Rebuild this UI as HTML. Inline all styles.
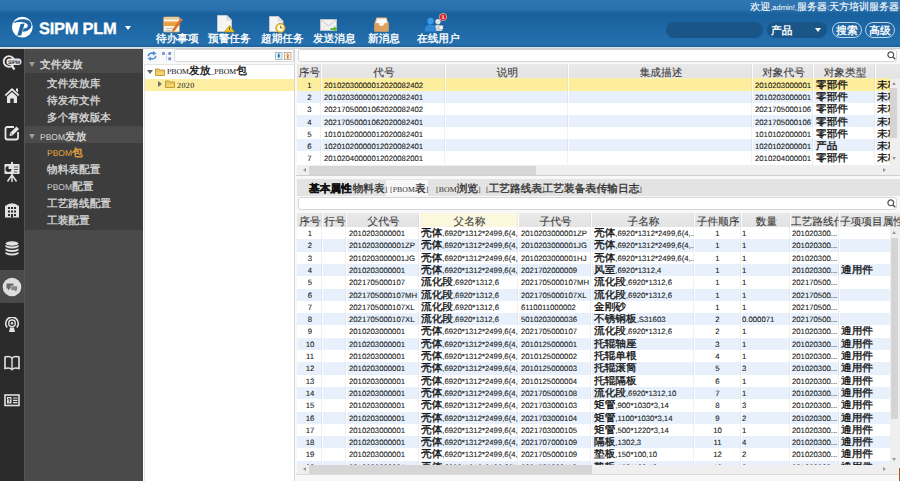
<!DOCTYPE html><html><head><meta charset="utf-8"><style>
*{box-sizing:border-box;margin:0;padding:0}
html,body{width:900px;height:481px;overflow:hidden;background:#fff;font-family:"Liberation Sans",sans-serif;font-size:7.75px;color:#222;text-rendering:geometricPrecision}
.a{position:absolute}
.c{font-size:10.67px;line-height:0;letter-spacing:0;font-family:"Liberation Sans",sans-serif;-webkit-text-stroke:0.35px currentColor}
#hdr{left:0;top:0;width:900px;height:47px;background:linear-gradient(to bottom,#2e76b2 0px,#2b71ad 9px,#18619d 14px,#1b64a1 22px,#2470ae 44px,#20629a 46px,#2a6a9e 47px)}
#hline{left:0;top:47px;width:900px;height:2px;background:linear-gradient(#dcecf7,#c9c9c9)}
#iconbar{left:0;top:49px;width:24px;height:432px;background:#2b2b2b}
#menu{left:24px;top:49px;width:119px;height:432px;background:#4a4a4a;border-left:1px solid #555}
.mh{position:absolute;left:0;width:119px;height:17px;line-height:17px;color:#dcdcdc;padding-left:15px;font-size:8.5px}
.mh .tri{position:absolute;left:4px;top:6px;width:0;height:0;border-left:3px solid transparent;border-right:3px solid transparent;border-top:5px solid #9a9a9a}
.ms{position:absolute;left:0;width:119px;background:#3d3d3d}
.mi{position:absolute;left:22px;height:17px;line-height:17px;color:#d6d6d6;white-space:nowrap;font-size:8.5px}
#tree{left:143px;top:49px;width:151px;height:432px;background:#fff}
#main{left:294px;top:49px;width:606px;height:432px;background:#f8f8f8;border-left:1px solid #d6d6d6}
.grid{position:absolute;background:#fff;overflow:hidden}
.gh{position:absolute;left:0;top:0;height:15px;background:linear-gradient(#e9e9e9,#e3e3e3)}
.hc{position:absolute;top:0;height:15px;line-height:20px;text-align:center;white-space:nowrap;overflow:hidden;color:#3a3a3a}
.hr .c{font-size:10px;-webkit-text-stroke:0.1px currentColor}
.hc .c{-webkit-text-stroke:0.1px currentColor}
.row{position:absolute;left:0}
.u .cell{top:1.8px}
.vl{position:absolute;width:1px;background:rgba(255,255,255,0.85);box-shadow:-1px 0 0 rgba(200,200,200,0.25)}
.cell{position:absolute;top:1px;white-space:nowrap;overflow:hidden;color:#161616;-webkit-text-stroke:0.08px #161616}
.even{background:#e7f0fb}
.sel{background:linear-gradient(#fdf0a4,#fdec99 50%,#fdefa3)}
.tab{position:absolute;top:0;height:16px;line-height:19px;white-space:nowrap;color:#333;font-family:"Liberation Serif",serif;letter-spacing:0.1px}
.sb{position:absolute;background:#e4e4e4}
</style></head><body><div class="a" id="hdr"></div><div class="a" id="hline"></div>
<svg class="a" style="left:11px;top:16px" width="23" height="23" viewBox="0 0 23 23">
<circle cx="11.3" cy="11.1" r="10.4" fill="#fff"/>
<path d="M2.5 7 C5.5 2.2 18.5 1.8 20.3 7.5 C21.6 12 17 15.8 11.8 15.8 L12.6 12.6 C15.6 12.6 17.2 11 16.7 9 C16 6.3 8.5 5.2 2.5 7 Z" fill="#1d66a8"/>
<path d="M6.3 19.8 L10.3 19.3 L13.6 7.6 L9.6 8.1 Z" fill="#1d66a8"/>
</svg>
<div class="a" style="left:39px;top:18.5px;height:20px;line-height:20px;font-size:16.5px;font-weight:bold;color:#fff;letter-spacing:-0.3px;-webkit-text-stroke:0.3px #fff">SIPM PLM</div>
<div class="a" style="left:125px;top:26px;width:0;height:0;border-left:3.5px solid transparent;border-right:3.5px solid transparent;border-top:4px solid #fff"></div>
<div class="a" style="left:156px;top:35px;height:9px;line-height:9px;color:#fff;white-space:nowrap"><span class="c">待办事项</span></div>
<div class="a" style="left:208px;top:35px;height:9px;line-height:9px;color:#fff;white-space:nowrap"><span class="c">预警任务</span></div>
<div class="a" style="left:261px;top:35px;height:9px;line-height:9px;color:#fff;white-space:nowrap"><span class="c">超期任务</span></div>
<div class="a" style="left:313px;top:35px;height:9px;line-height:9px;color:#fff;white-space:nowrap"><span class="c">发送消息</span></div>
<div class="a" style="left:368px;top:35px;height:9px;line-height:9px;color:#fff;white-space:nowrap"><span class="c">新消息</span></div>
<div class="a" style="left:417px;top:35px;height:9px;line-height:9px;color:#fff;white-space:nowrap"><span class="c">在线用户</span></div>
<svg class="a" style="left:163px;top:16px" width="20" height="17" viewBox="0 0 20 17">
<rect x="0.5" y="1" width="16" height="15" rx="1" fill="#f7f3ea" stroke="#b99a6a" stroke-width="0.8"/>
<rect x="1" y="1.5" width="15" height="2" fill="#e8c890"/>
<rect x="1" y="5.5" width="15" height="4.5" fill="#e8a040"/>
<path d="M3 12.5 H10 M3 14.5 H8" stroke="#bbb" stroke-width="0.9"/>
<path d="M9.5 13.5 L17.5 2.5 L19.5 4 L11.5 15 L9 16 Z" fill="#d9702a"/>
<path d="M17.5 2.5 L19.5 4" stroke="#f0c0a0" stroke-width="0.8"/>
</svg>
<svg class="a" style="left:217px;top:14.5px" width="18" height="18" viewBox="0 0 18 18">
<path d="M0.5 0.5 H10 L14.5 5 V16.5 H0.5 Z" fill="#f4f4f4" stroke="#d0d0d0" stroke-width="0.8"/>
<path d="M10 0.5 V5 H14.5" fill="#e0e0e0" stroke="#c8c8c8" stroke-width="0.6"/>
<path d="M12.5 10.5 L17.5 17 H7.5 Z" fill="#f3c42a" stroke="#b8860b" stroke-width="0.7"/>
<path d="M12.5 12.5 V14.8" stroke="#6a4a00" stroke-width="1"/>
</svg>
<svg class="a" style="left:269px;top:15.5px" width="18" height="17" viewBox="0 0 18 17">
<path d="M0.5 0.5 H9.5 L14 5 V15.5 H0.5 Z" fill="#f4f4f4" stroke="#d0d0d0" stroke-width="0.8"/>
<path d="M9.5 0.5 V5 H14" fill="#e0e0e0" stroke="#c8c8c8" stroke-width="0.6"/>
<circle cx="11.5" cy="12" r="4.6" fill="#f6d252" stroke="#b88a20" stroke-width="0.9"/>
<circle cx="11.5" cy="12" r="3.2" fill="#fff6d0"/>
<path d="M11.5 9.8 V12 H13.5" stroke="#806020" stroke-width="0.9" fill="none"/>
</svg>
<svg class="a" style="left:320px;top:18.5px" width="18" height="13" viewBox="0 0 18 13">
<rect x="0.5" y="0.5" width="16" height="11" fill="#f2f2f2" stroke="#c8c8c8" stroke-width="0.8"/>
<path d="M0.5 0.5 L8.5 7 L16.5 0.5" fill="none" stroke="#c0c0c0" stroke-width="0.9"/>
<path d="M0.5 11.5 L6.5 6 M16.5 11.5 L10.5 6" fill="none" stroke="#d8d8d8" stroke-width="0.7"/>
<path d="M10.5 9 H14 V7 L17.5 10 L14 13 V11 H10.5 Z" fill="#5cb838"/>
</svg>
<svg class="a" style="left:374px;top:17px" width="15" height="15" viewBox="0 0 15 15">
<path d="M0.5 6 L2.5 0.5 H12.5 L14.5 6 V14.5 H0.5 Z" fill="#e9b56e"/>
<path d="M3 1.5 H12 L13 6 H2 Z" fill="#fbfbfb"/>
<path d="M0.5 6 H4.5 Q5 9 7.5 9 Q10 9 10.5 6 H14.5 V14.5 H0.5 Z" fill="#dca060"/>
<path d="M4.5 6 Q5 9 7.5 9 Q10 9 10.5 6" fill="#fff" fill-opacity="0.85"/>
</svg>
<svg class="a" style="left:424px;top:12.5px" width="23" height="19" viewBox="0 0 23 19">
<circle cx="14" cy="8.5" r="2.6" fill="#e6e6e6"/>
<path d="M10 18 Q10 11.5 14 11.5 Q18 11.5 18 18 Z" fill="#d8d8d8"/>
<rect x="15" y="12.5" width="4" height="4" fill="#f8f8f8" stroke="#999" stroke-width="0.5"/>
<circle cx="6.5" cy="8" r="3.2" fill="#3a9ae8"/>
<path d="M0.5 18.5 Q0.5 11.5 6.5 11.5 Q12.5 11.5 12.5 18.5 Z" fill="#2e88d8"/>
<circle cx="19" cy="4" r="3.7" fill="#d82020" stroke="#f0f0f0" stroke-width="0.5"/>
<text x="19" y="6.1" font-size="5.5" fill="#fff" text-anchor="middle" font-family="Liberation Sans" font-weight="bold">1</text>
</svg>
<div class="a hr" style="right:1px;top:3px;height:10px;line-height:10px;color:#fff;white-space:nowrap;font-size:7.5px"><span class="c">欢迎</span>,admin!,<span class="c">服务器</span>:<span class="c">天方培训服务器</span></div>
<div class="a" style="left:666px;top:22px;width:97px;height:16px;border-radius:8px;background:#1a5587"></div>
<div class="a" style="left:767px;top:22px;width:60px;height:16px;border-radius:8px;background:#1a5587;color:#fff;line-height:19.5px;padding-left:4px"><span class="c">产品</span></div>
<div class="a" style="left:815px;top:28px;width:0;height:0;border-left:3.5px solid transparent;border-right:3.5px solid transparent;border-top:4px solid #fff"></div>
<div class="a" style="left:832px;top:22px;width:30px;height:16px;border-radius:8px;border:1px solid #b8d2e6;color:#fff;line-height:18px;text-align:center"><span class="c">搜索</span></div>
<div class="a" style="left:865px;top:22px;width:30px;height:16px;border-radius:8px;border:1px solid #b8d2e6;color:#fff;line-height:18px;text-align:center"><span class="c">高级</span></div>
<div class="a" id="iconbar"></div>
<div class="a" id="menu">
<div class="mh" style="top:8px"><span class="tri" style="top:5px"></span><span class="c">文件发放</span></div>
<div class="ms" style="top:24px;height:53px"></div>
<div class="mi" style="top:27px"><span class="c">文件发放库</span></div>
<div class="mi" style="top:44px"><span class="c">待发布文件</span></div>
<div class="mi" style="top:61px"><span class="c">多个有效版本</span></div>
<div class="mh" style="top:79px;height:16px;background:#4b4b4b;line-height:18px"><span class="tri"></span>PBOM<span class="c">发放</span></div>
<div class="ms" style="top:94px;height:87px"></div>
<div class="mi" style="top:96px;color:#e8a93a">PBOM<span class="c">包</span></div>
<div class="mi" style="top:113px;color:#d6d6d6"><span class="c">物料表配置</span></div>
<div class="mi" style="top:130px;color:#d6d6d6">PBOM<span class="c">配置</span></div>
<div class="mi" style="top:147px;color:#d6d6d6"><span class="c">工艺路线配置</span></div>
<div class="mi" style="top:164px;color:#d6d6d6"><span class="c">工装配置</span></div>
</div>
<svg class="a" style="left:2px;top:55px" width="20" height="16" viewBox="0 0 20 16">
<circle cx="7" cy="6.5" r="5.3" fill="none" stroke="#e6e6e6" stroke-width="1.8"/>
<path d="M9.5 10.5 L12.5 14.5" stroke="#e6e6e6" stroke-width="2.2"/>
<rect x="4.5" y="3.5" width="15" height="6.5" rx="3.2" fill="#e6e6e6"/>
<text x="12" y="8.9" font-size="5.2" font-weight="bold" text-anchor="middle" fill="#333" font-family="Liberation Sans" letter-spacing="-0.2">SIPM</text>
</svg>
<svg class="a" style="left:4px;top:87px" width="16" height="17" viewBox="0 0 16 17">
<path d="M8 1 L15.5 8 L14 9 L8 3.5 L2 9 L0.5 8 Z" fill="#e6e6e6"/>
<path d="M12 1.5 H14 V5.5 L12 3.8 Z" fill="#e6e6e6"/>
<path d="M3 9.5 L8 5 L13 9.5 V16 H9.7 V11.5 H6.3 V16 H3 Z" fill="#e6e6e6"/>
</svg>
<svg class="a" style="left:4px;top:125px" width="16" height="16" viewBox="0 0 16 16">
<path d="M10 2 H3.5 Q1.5 2 1.5 4 V12.5 Q1.5 14.5 3.5 14.5 H12 Q14 14.5 14 12.5 V7" fill="none" stroke="#e6e6e6" stroke-width="1.8"/>
<path d="M5.5 11 L6 8 L12.5 1.5 L15 4 L8.5 10.5 Z" fill="#e6e6e6"/>
<path d="M6.8 8.2 L8.2 9.6" stroke="#2b2b2b" stroke-width="0.8"/>
</svg>
<svg class="a" style="left:4px;top:162px" width="16" height="20" viewBox="0 0 16 20">
<rect x="0.5" y="2" width="15" height="10" fill="#e2e2e2"/>
<rect x="7" y="0" width="2" height="2.5" fill="#e2e2e2"/>
<path d="M4.5 7 L4.5 4 A3 3 0 1 0 7.5 7 Z" fill="#2b2b2b"/>
<path d="M10 5 H14 M10 7.5 H14 M10 10 H13" stroke="#555" stroke-width="1"/>
<path d="M8 12 V20 M8 13 L3.5 19.5 M8 13 L12.5 19.5" stroke="#e2e2e2" stroke-width="1.5"/>
</svg>
<svg class="a" style="left:4px;top:201px" width="16" height="17" viewBox="0 0 16 17">
<path d="M1 16.5 V5 Q8 -0.5 15 5 V16.5 Z" fill="#e2e2e2"/>
<rect x="4" y="6" width="2" height="2" fill="#2b2b2b"/><rect x="7" y="6" width="2" height="2" fill="#2b2b2b"/><rect x="10" y="6" width="2" height="2" fill="#2b2b2b"/>
<rect x="4" y="9.5" width="2" height="2" fill="#2b2b2b"/><rect x="7" y="9.5" width="2" height="2" fill="#2b2b2b"/><rect x="10" y="9.5" width="2" height="2" fill="#2b2b2b"/>
<rect x="4" y="13" width="2" height="2" fill="#2b2b2b"/><rect x="7" y="13" width="2" height="3.5" fill="#2b2b2b"/><rect x="10" y="13" width="2" height="2" fill="#2b2b2b"/>
</svg>
<svg class="a" style="left:5px;top:241px" width="14" height="16" viewBox="0 0 14 16">
<ellipse cx="7" cy="2.5" rx="6.5" ry="2.2" fill="#e2e2e2"/>
<path d="M0.5 4 Q7 7.2 13.5 4 V6 Q7 9.2 0.5 6 Z" fill="#e2e2e2"/>
<path d="M0.5 7.5 Q7 10.7 13.5 7.5 V9.5 Q7 12.7 0.5 9.5 Z" fill="#e2e2e2"/>
<path d="M0.5 11 Q7 14.2 13.5 11 V13 Q7 16.2 0.5 13 Z" fill="#e2e2e2"/>
</svg>

<div class="a" style="left:0;top:270px;width:24px;height:33px;background:#4a4a4a"></div>
<svg class="a" style="left:1.5px;top:276.5px" width="20" height="20" viewBox="0 0 20 20">
<circle cx="10" cy="10" r="9.3" fill="#dedede"/>
<path d="M4.5 6.5 H11.5 V11.5 H8 L6 13.5 V11.5 H4.5 Z" fill="#6a6a6a"/>
<path d="M9 9 H15.5 V13.5 H14.5 V15.5 L12.5 13.5 H9 Z" fill="#888" stroke="#dedede" stroke-width="0.6"/>
</svg>
<svg class="a" style="left:4px;top:317px" width="16" height="15" viewBox="0 0 16 15">
<path d="M3.2 10.5 A6.3 6.3 0 1 1 12.8 10.5" fill="none" stroke="#e2e2e2" stroke-width="1.6"/>
<circle cx="8" cy="6.3" r="3.3" fill="none" stroke="#e2e2e2" stroke-width="1.4"/>
<circle cx="8" cy="6.3" r="1.2" fill="#e2e2e2"/>
<path d="M5 15 L6 10.5 H10 L11 15 Z" fill="#e2e2e2"/>
</svg>
<svg class="a" style="left:4px;top:355px" width="16" height="16" viewBox="0 0 16 16">
<path d="M1 2 C4 1 6.5 1.5 8 3 C9.5 1.5 12 1 15 2 V13.5 C12 12.5 9.5 13 8 14.5 C6.5 13 4 12.5 1 13.5 Z" fill="none" stroke="#e2e2e2" stroke-width="1.6"/>
<path d="M8 3 V14.5" stroke="#e2e2e2" stroke-width="1.4"/>
</svg>
<svg class="a" style="left:4px;top:394px" width="16" height="13" viewBox="0 0 16 13">
<rect x="1" y="1" width="14" height="10.5" fill="none" stroke="#e2e2e2" stroke-width="1.6"/>
<rect x="3" y="3" width="4.5" height="6.5" fill="#e2e2e2"/>
<path d="M5.25 4 V8.5 M4 5.5 L5.25 4 L6.5 5.5" stroke="#2b2b2b" stroke-width="0.9" fill="none"/>
<path d="M9 4 H13.5 M9 6.3 H13.5 M9 8.6 H13.5" stroke="#e2e2e2" stroke-width="1.2"/>
</svg>

<div class="a" id="tree"></div>
<div class="a" style="left:143px;top:49px;width:151px;height:15px;background:#f9f9f9"></div>
<svg class="a" style="left:147px;top:51px" width="10" height="10" viewBox="0 0 10 10">
<path d="M1.2 5.2 C1.2 2.5 4 1.6 7 2.3" fill="none" stroke="#4a8fd2" stroke-width="1.7"/><path d="M6 0 L9.6 2.6 L5.8 4.6 Z" fill="#4a8fd2"/>
<path d="M8.8 4.8 C8.8 7.5 6 8.4 3 7.7" fill="none" stroke="#5a9ad8" stroke-width="1.7"/><path d="M4 10 L0.4 7.4 L4.2 5.4 Z" fill="#5a9ad8"/>
</svg>
<svg class="a" style="left:161px;top:51px" width="11" height="10" viewBox="0 0 11 10">
<rect x="1" y="1" width="3" height="3" rx="1" fill="#7a92d2"/><rect x="7.2" y="1" width="3" height="3" rx="1" fill="#7a92d2"/><rect x="7.2" y="6.2" width="3" height="3" rx="0.6" fill="#7a92d2"/>
<path d="M5.6 3 V9.5" stroke="#a8b4d8" stroke-width="0.8" stroke-dasharray="1 0.8"/>
</svg>

<div class="a" style="left:174px;top:49px;width:120px;height:13px;background:#fff;border:1px solid #d8d8d8;border-radius:2px"></div>
<svg class="a" style="left:275px;top:51.5px" width="17" height="8" viewBox="0 0 17 8">
<rect x="0.5" y="0.5" width="6.5" height="7" fill="#e8f6fc" stroke="#9aa8b0" stroke-width="0.8"/>
<path d="M2.2 3.5 H5.3 L3.75 6.5 Z M3 1.5 H4.5 V4 H3 Z" fill="#1a7cb8"/>
<rect x="9.5" y="0.5" width="6.5" height="7" fill="#fcefe6" stroke="#a8a09a" stroke-width="0.8"/>
<path d="M11.2 4 H14.3 L12.75 1.2 Z M12 3.5 H13.5 V6.5 H12 Z" fill="#e06a1a"/>
</svg>
<div class="a" style="left:144px;top:64px;width:150px;height:417px;border:1px solid #e4e4e4;border-right:none;border-bottom:none;background:#fff"></div>
<div class="a" style="left:145px;top:78.5px;width:149px;height:12.5px;background:#fdeea2"></div>
<div class="a" style="left:147px;top:70px;width:0;height:0;border-left:3px solid transparent;border-right:3px solid transparent;border-top:4.5px solid #666"></div>
<svg class="a" style="left:155px;top:68px" width="10" height="8" viewBox="0 0 10 8"><path d="M0.5 1 H4 L5 2 H9.5 V7.5 H0.5 Z" fill="#f2d46a" stroke="#b08a28" stroke-width="0.8"/><path d="M0.5 3 H9.5" stroke="#c9a440" stroke-width="0.6"/></svg>
<div class="a" style="left:167px;top:66px;height:12px;line-height:12px;color:#111;white-space:nowrap;font-family:Liberation Serif;letter-spacing:0">PBOM<span class="c">发放</span>_PBOM<span class="c">包</span></div>
<div class="a" style="left:158px;top:81px;width:0;height:0;border-top:3px solid transparent;border-bottom:3px solid transparent;border-left:4.5px solid #707070"></div>
<svg class="a" style="left:165px;top:80px" width="10" height="8" viewBox="0 0 10 8"><path d="M0.5 1 H4 L5 2 H9.5 V7.5 H0.5 Z" fill="#f2d46a" stroke="#b08a28" stroke-width="0.8"/><path d="M0.5 3 H9.5" stroke="#c9a440" stroke-width="0.6"/></svg>
<div class="a" style="left:177px;top:79px;height:13px;line-height:13px;color:#111;white-space:nowrap;font-family:Liberation Serif;font-size:8px;letter-spacing:0.4px">2020</div>
<div class="a" id="main"></div>
<div class="a" style="left:298px;top:49px;width:599px;height:13px;background:#fff;border:1px solid #d6d6d6;border-radius:3px"></div><svg class="a" style="left:887px;top:51px" width="9" height="9" viewBox="0 0 9 9"><circle cx="3.8" cy="3.8" r="2.9" fill="none" stroke="#555" stroke-width="1.3"/><path d="M6 6 L8.3 8.3" stroke="#555" stroke-width="1.6"/></svg>
<div class="grid" style="left:297px;top:64px;width:603px;height:112px">
<div class="gh" style="width:603px">
<div class="hc" style="left:0px;width:25px"><span class="c">序号</span></div>
<div class="hc" style="left:25px;width:124px"><span class="c">代号</span></div>
<div class="hc" style="left:149px;width:123px"><span class="c">说明</span></div>
<div class="hc" style="left:272px;width:184px"><span class="c">集成描述</span></div>
<div class="hc" style="left:456px;width:61px"><span class="c">对象代号</span></div>
<div class="hc" style="left:517px;width:62px"><span class="c">对象类型</span></div>
<div class="hc" style="left:579px;width:14px"></div>
</div>
<div class="row u sel" style="top:14.40px;width:593px;height:12.15px;line-height:12.15px">
<div class="cell" style="left:0;width:25px;text-align:center">1</div>
<div class="cell" style="left:27px;width:120px">20102030000012020082402</div>
<div class="cell" style="left:458px;width:60px">2010203000001</div>
<div class="cell" style="left:519px;width:60px"><span class="c">零部件</span></div>
<div class="cell" style="left:580px;width:13px"><span class="c">未核准</span></div>
</div>
<div class="row u even" style="top:26.55px;width:593px;height:12.15px;line-height:12.15px">
<div class="cell" style="left:0;width:25px;text-align:center">2</div>
<div class="cell" style="left:27px;width:120px">20102030000012020082401</div>
<div class="cell" style="left:458px;width:60px">2010203000001</div>
<div class="cell" style="left:519px;width:60px"><span class="c">零部件</span></div>
<div class="cell" style="left:580px;width:13px"><span class="c">未核准</span></div>
</div>
<div class="row u " style="top:38.70px;width:593px;height:12.15px;line-height:12.15px">
<div class="cell" style="left:0;width:25px;text-align:center">3</div>
<div class="cell" style="left:27px;width:120px">20217050001062020082402</div>
<div class="cell" style="left:458px;width:60px">2021705000106</div>
<div class="cell" style="left:519px;width:60px"><span class="c">零部件</span></div>
<div class="cell" style="left:580px;width:13px"><span class="c">未核准</span></div>
</div>
<div class="row u even" style="top:50.85px;width:593px;height:12.15px;line-height:12.15px">
<div class="cell" style="left:0;width:25px;text-align:center">4</div>
<div class="cell" style="left:27px;width:120px">20217050001062020082401</div>
<div class="cell" style="left:458px;width:60px">2021705000106</div>
<div class="cell" style="left:519px;width:60px"><span class="c">零部件</span></div>
<div class="cell" style="left:580px;width:13px"><span class="c">未核准</span></div>
</div>
<div class="row u " style="top:63.00px;width:593px;height:12.15px;line-height:12.15px">
<div class="cell" style="left:0;width:25px;text-align:center">5</div>
<div class="cell" style="left:27px;width:120px">10101020000012020082401</div>
<div class="cell" style="left:458px;width:60px">1010102000001</div>
<div class="cell" style="left:519px;width:60px"><span class="c">零部件</span></div>
<div class="cell" style="left:580px;width:13px"><span class="c">未核准</span></div>
</div>
<div class="row u even" style="top:75.15px;width:593px;height:12.15px;line-height:12.15px">
<div class="cell" style="left:0;width:25px;text-align:center">6</div>
<div class="cell" style="left:27px;width:120px">10201020000012020082401</div>
<div class="cell" style="left:458px;width:60px">1020102000001</div>
<div class="cell" style="left:519px;width:60px"><span class="c">产品</span></div>
<div class="cell" style="left:580px;width:13px"><span class="c">未核准</span></div>
</div>
<div class="row u " style="top:87.30px;width:593px;height:12.15px;line-height:12.15px">
<div class="cell" style="left:0;width:25px;text-align:center">7</div>
<div class="cell" style="left:27px;width:120px">20102040000012020082001</div>
<div class="cell" style="left:458px;width:60px">2010204000001</div>
<div class="cell" style="left:519px;width:60px"><span class="c">零部件</span></div>
<div class="cell" style="left:580px;width:13px"><span class="c">未核准</span></div>
</div>
<div class="vl" style="left:24px;top:0;height:150px"></div>
<div class="vl" style="left:148px;top:0;height:150px"></div>
<div class="vl" style="left:271px;top:0;height:150px"></div>
<div class="vl" style="left:455px;top:0;height:150px"></div>
<div class="vl" style="left:516px;top:0;height:150px"></div>
<div class="vl" style="left:578px;top:0;height:150px"></div>
</div>
<div class="sb" style="left:890px;top:79px;width:10px;height:86px;background:#efefef"></div>
<div class="sb" style="left:890px;top:88px;width:7px;height:50px;background:#d4d4d4"></div>
<div class="a" style="left:892px;top:82px;width:0;height:0;border-left:2.5px solid transparent;border-right:2.5px solid transparent;border-bottom:3.5px solid #999"></div>
<div class="a" style="left:892px;top:157px;width:0;height:0;border-left:2.5px solid transparent;border-right:2.5px solid transparent;border-top:3.5px solid #999"></div>
<div class="sb" style="left:297px;top:165px;width:603px;height:10px;background:#efefef"></div>
<div class="sb" style="left:309px;top:165.5px;width:227px;height:9.5px;background:#d6d6d6"></div>
<div class="a" style="left:302.5px;top:168px;width:0;height:0;border-top:2.5px solid transparent;border-bottom:2.5px solid transparent;border-right:3.5px solid #999"></div>
<div class="a" style="left:883px;top:168px;width:0;height:0;border-top:2.5px solid transparent;border-bottom:2.5px solid transparent;border-left:3.5px solid #999"></div>
<div class="a" style="left:296px;top:175px;width:604px;height:1px;background:#d0d0d0"></div>
<div class="a" style="left:297px;top:179px;width:603px;height:17px;background:#e3e3e3"></div>
<div class="a" style="left:386px;top:180px;width:42px;height:16px;background:#f7f7f7"></div>
<div class="tab" style="left:309px;top:180px;font-weight:bold;color:#111"><span class="c">基本属性</span></div>
<div class="tab" style="left:350px;top:180px;">[<span class="c">物料表</span>]</div>
<div class="tab" style="left:390px;top:180px;">[PBOM<span class="c">表</span>]</div>
<div class="tab" style="left:436px;top:180px;">[BOM<span class="c">浏览</span>]</div>
<div class="tab" style="left:486px;top:180px;">[<span class="c">工艺路线表</span>]</div>
<div class="tab" style="left:540px;top:180px;">[<span class="c">工艺装备表</span>]</div>
<div class="tab" style="left:594px;top:180px;">[<span class="c">传输日志</span>]</div>
<div class="a" style="left:298px;top:197px;width:599px;height:13px;background:#fff;border:1px solid #d6d6d6;border-radius:3px"></div><svg class="a" style="left:887px;top:199px" width="9" height="9" viewBox="0 0 9 9"><circle cx="3.8" cy="3.8" r="2.9" fill="none" stroke="#555" stroke-width="1.3"/><path d="M6 6 L8.3 8.3" stroke="#555" stroke-width="1.6"/></svg>
<div class="grid" style="left:297px;top:213px;width:603px;height:252px">
<div class="gh" style="width:603px;height:14px">
<div class="hc" style="left:0px;width:26px;height:14px;line-height:20px;"><span class="c">序号</span></div>
<div class="hc" style="left:26px;width:24px;height:14px;line-height:20px;"><span class="c">行号</span></div>
<div class="hc" style="left:50px;width:73px;height:14px;line-height:20px;"><span class="c">父代号</span></div>
<div class="hc" style="left:123px;width:99px;height:14px;line-height:20px;background:#fcf8de;"><span class="c">父名称</span></div>
<div class="hc" style="left:222px;width:73px;height:14px;line-height:20px;"><span class="c">子代号</span></div>
<div class="hc" style="left:295px;width:103px;height:14px;line-height:20px;"><span class="c">子名称</span></div>
<div class="hc" style="left:397px;width:48px;height:14px;line-height:20px;"><span class="c">子件顺序</span></div>
<div class="hc" style="left:445px;width:49px;height:14px;line-height:20px;"><span class="c">数量</span></div>
<div class="hc" style="left:494px;width:49px;height:14px;line-height:20px;"><span class="c">工艺路线代</span>...</div>
<div class="hc" style="left:543px;width:60px;height:14px;line-height:20px;"><span class="c">子项项目属性</span></div>
</div>
<div class="row " style="top:14.00px;width:593px;height:12.30px;line-height:12.30px">
<div class="cell" style="left:0;width:26px;text-align:center">1</div>
<div class="cell" style="left:52px;width:70px">2010203000001</div>
<div class="cell" style="left:124px;width:97px"><span class="c">壳体</span>,6920*1312*2499,6(4,...</div>
<div class="cell" style="left:224px;width:70px">2010203000001ZP</div>
<div class="cell" style="left:297px;width:100px"><span class="c">壳体</span>,6920*1312*2499,6(4,...</div>
<div class="cell" style="left:398px;width:45px;text-align:center">1</div>
<div class="cell" style="left:445px;width:48px">1</div>
<div class="cell" style="left:495px;width:48px">201020300...</div>
<div class="cell" style="left:544px;width:48px"></div>
</div>
<div class="row even" style="top:26.30px;width:593px;height:12.30px;line-height:12.30px">
<div class="cell" style="left:0;width:26px;text-align:center">2</div>
<div class="cell" style="left:52px;width:70px">2010203000001ZP</div>
<div class="cell" style="left:124px;width:97px"><span class="c">壳体</span>,6920*1312*2499,6(4,...</div>
<div class="cell" style="left:224px;width:70px">2010203000001JG</div>
<div class="cell" style="left:297px;width:100px"><span class="c">壳体</span>,6920*1312*2499,6(4,...</div>
<div class="cell" style="left:398px;width:45px;text-align:center">1</div>
<div class="cell" style="left:445px;width:48px">1</div>
<div class="cell" style="left:495px;width:48px">201020300...</div>
<div class="cell" style="left:544px;width:48px"></div>
</div>
<div class="row " style="top:38.60px;width:593px;height:12.30px;line-height:12.30px">
<div class="cell" style="left:0;width:26px;text-align:center">3</div>
<div class="cell" style="left:52px;width:70px">2010203000001JG</div>
<div class="cell" style="left:124px;width:97px"><span class="c">壳体</span>,6920*1312*2499,6(4,...</div>
<div class="cell" style="left:224px;width:70px">2010203000001HJ</div>
<div class="cell" style="left:297px;width:100px"><span class="c">壳体</span>,6920*1312*2499,6(4,...</div>
<div class="cell" style="left:398px;width:45px;text-align:center">1</div>
<div class="cell" style="left:445px;width:48px">1</div>
<div class="cell" style="left:495px;width:48px">201020300...</div>
<div class="cell" style="left:544px;width:48px"></div>
</div>
<div class="row even" style="top:50.90px;width:593px;height:12.30px;line-height:12.30px">
<div class="cell" style="left:0;width:26px;text-align:center">4</div>
<div class="cell" style="left:52px;width:70px">2010203000001</div>
<div class="cell" style="left:124px;width:97px"><span class="c">壳体</span>,6920*1312*2499,6(4,...</div>
<div class="cell" style="left:224px;width:70px">2021702000009</div>
<div class="cell" style="left:297px;width:100px"><span class="c">风室</span>,6920*1312,4</div>
<div class="cell" style="left:398px;width:45px;text-align:center">1</div>
<div class="cell" style="left:445px;width:48px">1</div>
<div class="cell" style="left:495px;width:48px">201020300...</div>
<div class="cell" style="left:544px;width:48px"><span class="c">通用件</span></div>
</div>
<div class="row " style="top:63.20px;width:593px;height:12.30px;line-height:12.30px">
<div class="cell" style="left:0;width:26px;text-align:center">5</div>
<div class="cell" style="left:52px;width:70px">2021705000107</div>
<div class="cell" style="left:124px;width:97px"><span class="c">流化段</span>,6920*1312,6</div>
<div class="cell" style="left:224px;width:70px">2021705000107MH</div>
<div class="cell" style="left:297px;width:100px"><span class="c">流化段</span>,6920*1312,6</div>
<div class="cell" style="left:398px;width:45px;text-align:center">1</div>
<div class="cell" style="left:445px;width:48px">1</div>
<div class="cell" style="left:495px;width:48px">202170500...</div>
<div class="cell" style="left:544px;width:48px"></div>
</div>
<div class="row even" style="top:75.50px;width:593px;height:12.30px;line-height:12.30px">
<div class="cell" style="left:0;width:26px;text-align:center">6</div>
<div class="cell" style="left:52px;width:70px">2021705000107MH</div>
<div class="cell" style="left:124px;width:97px"><span class="c">流化段</span>,6920*1312,6</div>
<div class="cell" style="left:224px;width:70px">2021705000107XL</div>
<div class="cell" style="left:297px;width:100px"><span class="c">流化段</span>,6920*1312,6</div>
<div class="cell" style="left:398px;width:45px;text-align:center">1</div>
<div class="cell" style="left:445px;width:48px">1</div>
<div class="cell" style="left:495px;width:48px">202170500...</div>
<div class="cell" style="left:544px;width:48px"></div>
</div>
<div class="row " style="top:87.80px;width:593px;height:12.30px;line-height:12.30px">
<div class="cell" style="left:0;width:26px;text-align:center">7</div>
<div class="cell" style="left:52px;width:70px">2021705000107XL</div>
<div class="cell" style="left:124px;width:97px"><span class="c">流化段</span>,6920*1312,6</div>
<div class="cell" style="left:224px;width:70px">6110011000002</div>
<div class="cell" style="left:297px;width:100px"><span class="c">金刚砂</span></div>
<div class="cell" style="left:398px;width:45px;text-align:center">1</div>
<div class="cell" style="left:445px;width:48px">1</div>
<div class="cell" style="left:495px;width:48px">202170500...</div>
<div class="cell" style="left:544px;width:48px"></div>
</div>
<div class="row even" style="top:100.10px;width:593px;height:12.30px;line-height:12.30px">
<div class="cell" style="left:0;width:26px;text-align:center">8</div>
<div class="cell" style="left:52px;width:70px">2021705000107XL</div>
<div class="cell" style="left:124px;width:97px"><span class="c">流化段</span>,6920*1312,6</div>
<div class="cell" style="left:224px;width:70px">5010203000036</div>
<div class="cell" style="left:297px;width:100px"><span class="c">不锈钢板</span>,S31603</div>
<div class="cell" style="left:398px;width:45px;text-align:center">2</div>
<div class="cell" style="left:445px;width:48px">0.000071</div>
<div class="cell" style="left:495px;width:48px">202170500...</div>
<div class="cell" style="left:544px;width:48px"></div>
</div>
<div class="row " style="top:112.40px;width:593px;height:12.30px;line-height:12.30px">
<div class="cell" style="left:0;width:26px;text-align:center">9</div>
<div class="cell" style="left:52px;width:70px">2010203000001</div>
<div class="cell" style="left:124px;width:97px"><span class="c">壳体</span>,6920*1312*2499,6(4,...</div>
<div class="cell" style="left:224px;width:70px">2021705000107</div>
<div class="cell" style="left:297px;width:100px"><span class="c">流化段</span>,6920*1312,6</div>
<div class="cell" style="left:398px;width:45px;text-align:center">2</div>
<div class="cell" style="left:445px;width:48px">1</div>
<div class="cell" style="left:495px;width:48px">201020300...</div>
<div class="cell" style="left:544px;width:48px"><span class="c">通用件</span></div>
</div>
<div class="row even" style="top:124.70px;width:593px;height:12.30px;line-height:12.30px">
<div class="cell" style="left:0;width:26px;text-align:center">10</div>
<div class="cell" style="left:52px;width:70px">2010203000001</div>
<div class="cell" style="left:124px;width:97px"><span class="c">壳体</span>,6920*1312*2499,6(4,...</div>
<div class="cell" style="left:224px;width:70px">2010125000001</div>
<div class="cell" style="left:297px;width:100px"><span class="c">托辊轴座</span></div>
<div class="cell" style="left:398px;width:45px;text-align:center">3</div>
<div class="cell" style="left:445px;width:48px">1</div>
<div class="cell" style="left:495px;width:48px">201020300...</div>
<div class="cell" style="left:544px;width:48px"><span class="c">通用件</span></div>
</div>
<div class="row " style="top:137.00px;width:593px;height:12.30px;line-height:12.30px">
<div class="cell" style="left:0;width:26px;text-align:center">11</div>
<div class="cell" style="left:52px;width:70px">2010203000001</div>
<div class="cell" style="left:124px;width:97px"><span class="c">壳体</span>,6920*1312*2499,6(4,...</div>
<div class="cell" style="left:224px;width:70px">2010125000002</div>
<div class="cell" style="left:297px;width:100px"><span class="c">托辊单根</span></div>
<div class="cell" style="left:398px;width:45px;text-align:center">4</div>
<div class="cell" style="left:445px;width:48px">1</div>
<div class="cell" style="left:495px;width:48px">201020300...</div>
<div class="cell" style="left:544px;width:48px"><span class="c">通用件</span></div>
</div>
<div class="row even" style="top:149.30px;width:593px;height:12.30px;line-height:12.30px">
<div class="cell" style="left:0;width:26px;text-align:center">12</div>
<div class="cell" style="left:52px;width:70px">2010203000001</div>
<div class="cell" style="left:124px;width:97px"><span class="c">壳体</span>,6920*1312*2499,6(4,...</div>
<div class="cell" style="left:224px;width:70px">2010125000003</div>
<div class="cell" style="left:297px;width:100px"><span class="c">托辊滚筒</span></div>
<div class="cell" style="left:398px;width:45px;text-align:center">5</div>
<div class="cell" style="left:445px;width:48px">3</div>
<div class="cell" style="left:495px;width:48px">201020300...</div>
<div class="cell" style="left:544px;width:48px"><span class="c">通用件</span></div>
</div>
<div class="row " style="top:161.60px;width:593px;height:12.30px;line-height:12.30px">
<div class="cell" style="left:0;width:26px;text-align:center">13</div>
<div class="cell" style="left:52px;width:70px">2010203000001</div>
<div class="cell" style="left:124px;width:97px"><span class="c">壳体</span>,6920*1312*2499,6(4,...</div>
<div class="cell" style="left:224px;width:70px">2010125000004</div>
<div class="cell" style="left:297px;width:100px"><span class="c">托辊隔板</span></div>
<div class="cell" style="left:398px;width:45px;text-align:center">6</div>
<div class="cell" style="left:445px;width:48px">1</div>
<div class="cell" style="left:495px;width:48px">201020300...</div>
<div class="cell" style="left:544px;width:48px"><span class="c">通用件</span></div>
</div>
<div class="row even" style="top:173.90px;width:593px;height:12.30px;line-height:12.30px">
<div class="cell" style="left:0;width:26px;text-align:center">14</div>
<div class="cell" style="left:52px;width:70px">2010203000001</div>
<div class="cell" style="left:124px;width:97px"><span class="c">壳体</span>,6920*1312*2499,6(4,...</div>
<div class="cell" style="left:224px;width:70px">2021705000108</div>
<div class="cell" style="left:297px;width:100px"><span class="c">流化段</span>,6920*1312,10</div>
<div class="cell" style="left:398px;width:45px;text-align:center">7</div>
<div class="cell" style="left:445px;width:48px">1</div>
<div class="cell" style="left:495px;width:48px">201020300...</div>
<div class="cell" style="left:544px;width:48px"><span class="c">通用件</span></div>
</div>
<div class="row " style="top:186.20px;width:593px;height:12.30px;line-height:12.30px">
<div class="cell" style="left:0;width:26px;text-align:center">15</div>
<div class="cell" style="left:52px;width:70px">2010203000001</div>
<div class="cell" style="left:124px;width:97px"><span class="c">壳体</span>,6920*1312*2499,6(4,...</div>
<div class="cell" style="left:224px;width:70px">2021703000103</div>
<div class="cell" style="left:297px;width:100px"><span class="c">矩管</span>,900*1030*3,14</div>
<div class="cell" style="left:398px;width:45px;text-align:center">8</div>
<div class="cell" style="left:445px;width:48px">3</div>
<div class="cell" style="left:495px;width:48px">201020300...</div>
<div class="cell" style="left:544px;width:48px"><span class="c">通用件</span></div>
</div>
<div class="row even" style="top:198.50px;width:593px;height:12.30px;line-height:12.30px">
<div class="cell" style="left:0;width:26px;text-align:center">16</div>
<div class="cell" style="left:52px;width:70px">2010203000001</div>
<div class="cell" style="left:124px;width:97px"><span class="c">壳体</span>,6920*1312*2499,6(4,...</div>
<div class="cell" style="left:224px;width:70px">2021703000104</div>
<div class="cell" style="left:297px;width:100px"><span class="c">矩管</span>,1100*1030*3,14</div>
<div class="cell" style="left:398px;width:45px;text-align:center">9</div>
<div class="cell" style="left:445px;width:48px">2</div>
<div class="cell" style="left:495px;width:48px">201020300...</div>
<div class="cell" style="left:544px;width:48px"><span class="c">通用件</span></div>
</div>
<div class="row " style="top:210.80px;width:593px;height:12.30px;line-height:12.30px">
<div class="cell" style="left:0;width:26px;text-align:center">17</div>
<div class="cell" style="left:52px;width:70px">2010203000001</div>
<div class="cell" style="left:124px;width:97px"><span class="c">壳体</span>,6920*1312*2499,6(4,...</div>
<div class="cell" style="left:224px;width:70px">2021703000105</div>
<div class="cell" style="left:297px;width:100px"><span class="c">矩管</span>,500*1220*3,14</div>
<div class="cell" style="left:398px;width:45px;text-align:center">10</div>
<div class="cell" style="left:445px;width:48px">1</div>
<div class="cell" style="left:495px;width:48px">201020300...</div>
<div class="cell" style="left:544px;width:48px"><span class="c">通用件</span></div>
</div>
<div class="row even" style="top:223.10px;width:593px;height:12.30px;line-height:12.30px">
<div class="cell" style="left:0;width:26px;text-align:center">18</div>
<div class="cell" style="left:52px;width:70px">2010203000001</div>
<div class="cell" style="left:124px;width:97px"><span class="c">壳体</span>,6920*1312*2499,6(4,...</div>
<div class="cell" style="left:224px;width:70px">2021707000109</div>
<div class="cell" style="left:297px;width:100px"><span class="c">隔板</span>,1302,3</div>
<div class="cell" style="left:398px;width:45px;text-align:center">11</div>
<div class="cell" style="left:445px;width:48px">4</div>
<div class="cell" style="left:495px;width:48px">201020300...</div>
<div class="cell" style="left:544px;width:48px"><span class="c">通用件</span></div>
</div>
<div class="row " style="top:235.40px;width:593px;height:12.30px;line-height:12.30px">
<div class="cell" style="left:0;width:26px;text-align:center">19</div>
<div class="cell" style="left:52px;width:70px">2010203000001</div>
<div class="cell" style="left:124px;width:97px"><span class="c">壳体</span>,6920*1312*2499,6(4,...</div>
<div class="cell" style="left:224px;width:70px">2021705000109</div>
<div class="cell" style="left:297px;width:100px"><span class="c">垫板</span>,150*100,10</div>
<div class="cell" style="left:398px;width:45px;text-align:center">12</div>
<div class="cell" style="left:445px;width:48px">2</div>
<div class="cell" style="left:495px;width:48px">201020300...</div>
<div class="cell" style="left:544px;width:48px"><span class="c">通用件</span></div>
</div>
<div class="row even" style="top:247.70px;width:593px;height:12.30px;line-height:12.30px">
<div class="cell" style="left:0;width:26px;text-align:center">20</div>
<div class="cell" style="left:52px;width:70px">2010203000001</div>
<div class="cell" style="left:124px;width:97px"><span class="c">壳体</span>,6920*1312*2499,6(4,...</div>
<div class="cell" style="left:224px;width:70px">2021705000110</div>
<div class="cell" style="left:297px;width:100px"><span class="c">垫板</span>,150*100,10</div>
<div class="cell" style="left:398px;width:45px;text-align:center">13</div>
<div class="cell" style="left:445px;width:48px">2</div>
<div class="cell" style="left:495px;width:48px">201020300...</div>
<div class="cell" style="left:544px;width:48px"><span class="c">通用件</span></div>
</div>
<div class="vl" style="left:25px;top:0;height:252px"></div>
<div class="vl" style="left:49px;top:0;height:252px"></div>
<div class="vl" style="left:122px;top:0;height:252px"></div>
<div class="vl" style="left:221px;top:0;height:252px"></div>
<div class="vl" style="left:294px;top:0;height:252px"></div>
<div class="vl" style="left:397px;top:0;height:252px"></div>
<div class="vl" style="left:444px;top:0;height:252px"></div>
<div class="vl" style="left:493px;top:0;height:252px"></div>
<div class="vl" style="left:542px;top:0;height:252px"></div>
</div>
<div class="sb" style="left:890px;top:227px;width:10px;height:238px;background:#efefef"></div>
<div class="sb" style="left:891px;top:238px;width:7px;height:181px;background:#d4d4d4"></div>
<div class="a" style="left:892px;top:231px;width:0;height:0;border-left:2.5px solid transparent;border-right:2.5px solid transparent;border-bottom:3.5px solid #999"></div>
<div class="a" style="left:892px;top:458px;width:0;height:0;border-left:2.5px solid transparent;border-right:2.5px solid transparent;border-top:3.5px solid #999"></div>
<div class="sb" style="left:297px;top:465px;width:603px;height:9px;background:#efefef"></div>
<div class="sb" style="left:309px;top:465px;width:283px;height:9px;background:#d6d6d6"></div>
<div class="a" style="left:302.5px;top:467px;width:0;height:0;border-top:2.5px solid transparent;border-bottom:2.5px solid transparent;border-right:3.5px solid #999"></div>
<div class="a" style="left:883px;top:467px;width:0;height:0;border-top:2.5px solid transparent;border-bottom:2.5px solid transparent;border-left:3.5px solid #999"></div>
<div class="a" style="left:296px;top:474px;width:604px;height:1px;background:#dadada"></div>
<div class="a" style="left:899px;top:468px;width:1px;height:13px;background:#b8501e"></div></body></html>
